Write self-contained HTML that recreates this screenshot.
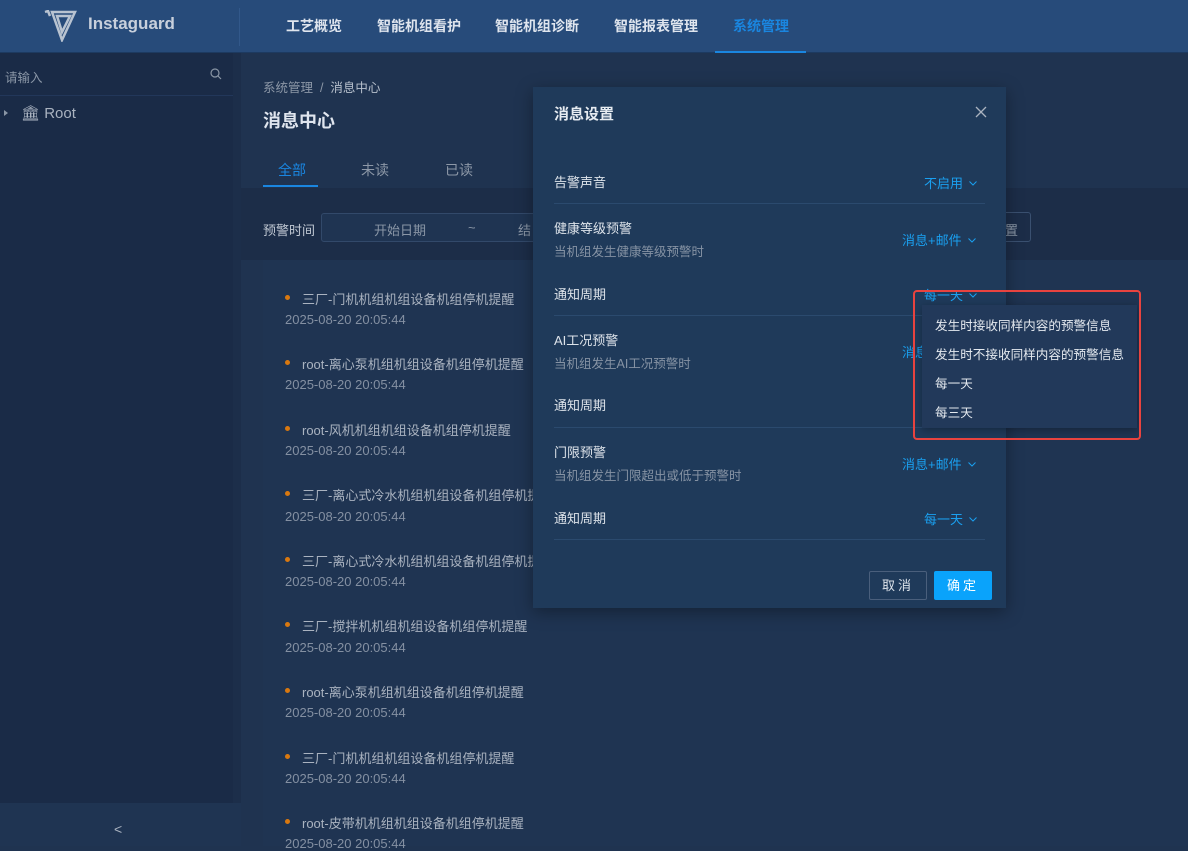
<!DOCTYPE html>
<html><head><meta charset="utf-8"><style>
*{margin:0;padding:0;box-sizing:border-box}
body{width:1188px;height:846px;overflow:hidden;background:#1f3350;font-family:"Liberation Sans","Noto Sans CJK SC",sans-serif;position:relative;color:#c7ced8}
.a{position:absolute;white-space:nowrap}
.hdr{left:0;top:0;width:1188px;height:53px;background:#274b7a;border-bottom:1px solid #1d3a60}
.nav{top:16px;font-size:14px;font-weight:bold;color:#dfe5ee}
.side{left:0;top:53px;width:233px;height:793px;background:#1a2b47}
.li{left:302px;font-size:13px;color:#aab3c0}
.dt{left:285px;font-size:13px;color:#8490a2}
.dot{width:5px;height:5px;border-radius:50%;background:#d9780f;left:285px}
.m{left:533px;top:87px;width:473px;height:521px;background:#1f3a5a;box-shadow:0 4px 16px rgba(0,0,0,.35)}
.lb{left:554px;font-size:13px;color:#dde3ea}
.sb{left:554px;font-size:12.5px;color:#8693a4}
.v{font-size:13px;color:#1aa0f0}
.v svg{margin-left:6px;vertical-align:2px}
.ln{left:554px;width:431px;height:1px;background:#2b4a6e}
.dd{left:935px;font-size:12.6px;color:#e4e9ef}
</style></head><body>
<div class="a hdr"></div>
<svg class="a" style="left:44px;top:10px" width="34" height="32" viewBox="0 0 34 32"><path d="M1 2 L4 1 L6 6 M8 2 L31 2 L18 30 Z M13 6 L26 6 L18 22 Z" fill="none" stroke="#b8c3d1" stroke-width="2.5"/></svg>
<div class="a" style="left:88px;top:14px;font-size:17px;font-weight:bold;color:#c8d0dc">Instaguard</div>
<div class="a" style="left:239px;top:8px;width:1px;height:38px;background:#32588a"></div>
<div class="a nav" style="left:286px">工艺概览</div>
<div class="a nav" style="left:377px">智能机组看护</div>
<div class="a nav" style="left:495px">智能机组诊断</div>
<div class="a nav" style="left:614px">智能报表管理</div>
<div class="a nav" style="left:733px;color:#1a86e0">系统管理</div>
<div class="a" style="left:715px;top:51px;width:91px;height:2px;background:#1a86e0"></div>
<div class="a side"></div>
<div class="a" style="left:0;top:95px;width:233px;height:1px;background:#22375a"></div>
<div class="a" style="left:5px;top:67px;font-size:12.5px;color:#8a96a6">请输入</div>
<svg class="a" style="left:210px;top:68px" width="12" height="12"><circle cx="5" cy="5" r="4" stroke="#8a96a6" fill="none" stroke-width="1.2"/><path d="M8 8 L11 11" stroke="#8a96a6" stroke-width="1.2"/></svg>
<div class="a" style="left:4px;top:110px;width:0;height:0;border-left:4px solid #8a96a6;border-top:3px solid transparent;border-bottom:3px solid transparent"></div>
<div class="a" style="left:21px;top:104px;font-size:15px;color:#aab3c0">🏛︎ Root</div>
<div class="a" style="left:0;top:803px;width:241px;height:43px;background:#1f3452"></div>
<div class="a" style="left:114px;top:821px;font-size:14px;color:#aab3c0">&lt;</div>
<div class="a" style="left:233px;top:53px;width:8px;height:750px;background:#1c2e4a"></div>
<div class="a" style="left:263px;top:77px;font-size:12.5px;color:#8d98a7">系统管理 &nbsp;/ &nbsp;<span style="color:#b8c1cd">消息中心</span></div>
<div class="a" style="left:263px;top:107px;font-size:18px;font-weight:bold;color:#dfe5ee">消息中心</div>
<div class="a" style="left:278px;top:160px;font-size:14px;color:#1a86e0">全部</div>
<div class="a" style="left:361px;top:160px;font-size:14px;color:#8d98a7">未读</div>
<div class="a" style="left:445px;top:160px;font-size:14px;color:#8d98a7">已读</div>
<div class="a" style="left:263px;top:185px;width:55px;height:2px;background:#1a86e0"></div>
<div class="a" style="left:241px;top:188px;width:947px;height:72px;background:#1c2d48"></div>
<div class="a" style="left:263px;top:220px;font-size:13px;color:#c0c8d3">预警时间</div>
<div class="a" style="left:321px;top:213px;width:230px;height:29px;border:1px solid #32496a;border-radius:3px;background:#1f3452"></div>
<div class="a" style="left:374px;top:220px;font-size:13px;color:#8a96a6">开始日期</div>
<div class="a" style="left:468px;top:220px;font-size:13px;color:#8a96a6">~</div>
<div class="a" style="left:518px;top:220px;font-size:13px;color:#8a96a6">结</div>
<div class="a" style="left:990px;top:212px;width:41px;height:30px;border:1px solid #3a5070;border-radius:3px"></div>
<div class="a" style="left:1005px;top:220px;font-size:13px;color:#8a96a6">置</div>
<div class="a" style="left:263px;top:260px;width:925px;height:586px;background:#1f3452"></div>
<div class="a dot" style="top:295px"></div><div class="a li" style="top:289px">三厂-门机机组机组设备机组停机提醒</div><div class="a dt" style="top:312px">2025-08-20 20:05:44</div>
<div class="a dot" style="top:360px"></div><div class="a li" style="top:354px">root-离心泵机组机组设备机组停机提醒</div><div class="a dt" style="top:377px">2025-08-20 20:05:44</div>
<div class="a dot" style="top:426px"></div><div class="a li" style="top:420px">root-风机机组机组设备机组停机提醒</div><div class="a dt" style="top:443px">2025-08-20 20:05:44</div>
<div class="a dot" style="top:491px"></div><div class="a li" style="top:485px">三厂-离心式冷水机组机组设备机组停机提</div><div class="a dt" style="top:509px">2025-08-20 20:05:44</div>
<div class="a dot" style="top:557px"></div><div class="a li" style="top:551px">三厂-离心式冷水机组机组设备机组停机提</div><div class="a dt" style="top:574px">2025-08-20 20:05:44</div>
<div class="a dot" style="top:622px"></div><div class="a li" style="top:616px">三厂-搅拌机机组机组设备机组停机提醒</div><div class="a dt" style="top:640px">2025-08-20 20:05:44</div>
<div class="a dot" style="top:688px"></div><div class="a li" style="top:682px">root-离心泵机组机组设备机组停机提醒</div><div class="a dt" style="top:705px">2025-08-20 20:05:44</div>
<div class="a dot" style="top:754px"></div><div class="a li" style="top:748px">三厂-门机机组机组设备机组停机提醒</div><div class="a dt" style="top:771px">2025-08-20 20:05:44</div>
<div class="a dot" style="top:819px"></div><div class="a li" style="top:813px">root-皮带机机组机组设备机组停机提醒</div><div class="a dt" style="top:836px">2025-08-20 20:05:44</div>

<div class="a m"></div>
<div class="a" style="left:554px;top:103px;font-size:15px;font-weight:bold;color:#e6ebf1">消息设置</div>
<svg class="a" style="left:975px;top:106px" width="12" height="12"><path d="M1 1 L11 11 M11 1 L1 11" stroke="#aab3c0" stroke-width="1.3"/></svg>
<div class="a lb" style="top:172px">告警声音</div><div class="a v" style="left:924px;top:173px">不启用<svg width="8" height="5"><path d="M0.5 0.5 L4 4 L7.5 0.5" stroke="#1aa0f0" fill="none"/></svg></div>
<div class="a ln" style="top:203px"></div>
<div class="a lb" style="top:218px">健康等级预警</div><div class="a sb" style="top:241px">当机组发生健康等级预警时</div><div class="a v" style="left:902px;top:230px">消息+邮件<svg width="8" height="5"><path d="M0.5 0.5 L4 4 L7.5 0.5" stroke="#1aa0f0" fill="none"/></svg></div>
<div class="a lb" style="top:284px">通知周期</div><div class="a v" style="left:924px;top:285px">每一天<svg width="8" height="5"><path d="M0.5 0.5 L4 4 L7.5 0.5" stroke="#1aa0f0" fill="none"/></svg></div>
<div class="a ln" style="top:315px"></div>
<div class="a lb" style="top:330px">AI工况预警</div><div class="a sb" style="top:353px">当机组发生AI工况预警时</div><div class="a v" style="left:902px;top:342px">消息+邮件<svg width="8" height="5"><path d="M0.5 0.5 L4 4 L7.5 0.5" stroke="#1aa0f0" fill="none"/></svg></div>
<div class="a lb" style="top:395px">通知周期</div>
<div class="a ln" style="top:427px"></div>
<div class="a lb" style="top:442px">门限预警</div><div class="a sb" style="top:465px">当机组发生门限超出或低于预警时</div><div class="a v" style="left:902px;top:454px">消息+邮件<svg width="8" height="5"><path d="M0.5 0.5 L4 4 L7.5 0.5" stroke="#1aa0f0" fill="none"/></svg></div>
<div class="a lb" style="top:508px">通知周期</div><div class="a v" style="left:924px;top:509px">每一天<svg width="8" height="5"><path d="M0.5 0.5 L4 4 L7.5 0.5" stroke="#1aa0f0" fill="none"/></svg></div>
<div class="a ln" style="top:539px"></div>
<div class="a" style="left:869px;top:571px;width:58px;height:29px;border:1px solid #4a5f7c;border-radius:2px;font-size:13px;color:#dde3ea;text-align:center;line-height:27px;letter-spacing:3px">取消</div>
<div class="a" style="left:934px;top:571px;width:58px;height:29px;background:#0aa3fb;border-radius:2px;font-size:13px;color:#fff;text-align:center;line-height:29px;letter-spacing:3px">确定</div>

<div class="a" style="left:922px;top:305px;width:215px;height:123px;background:#22395a;box-shadow:0 2px 8px rgba(0,0,0,.3)"></div>
<div class="a dd" style="top:315px">发生时接收同样内容的预警信息</div>
<div class="a dd" style="top:344px">发生时不接收同样内容的预警信息</div>
<div class="a dd" style="top:373px">每一天</div>
<div class="a dd" style="top:402px">每三天</div>
<div class="a" style="left:913px;top:290px;width:228px;height:150px;border:2px solid #e8433f;border-radius:4px"></div>
</body></html>
